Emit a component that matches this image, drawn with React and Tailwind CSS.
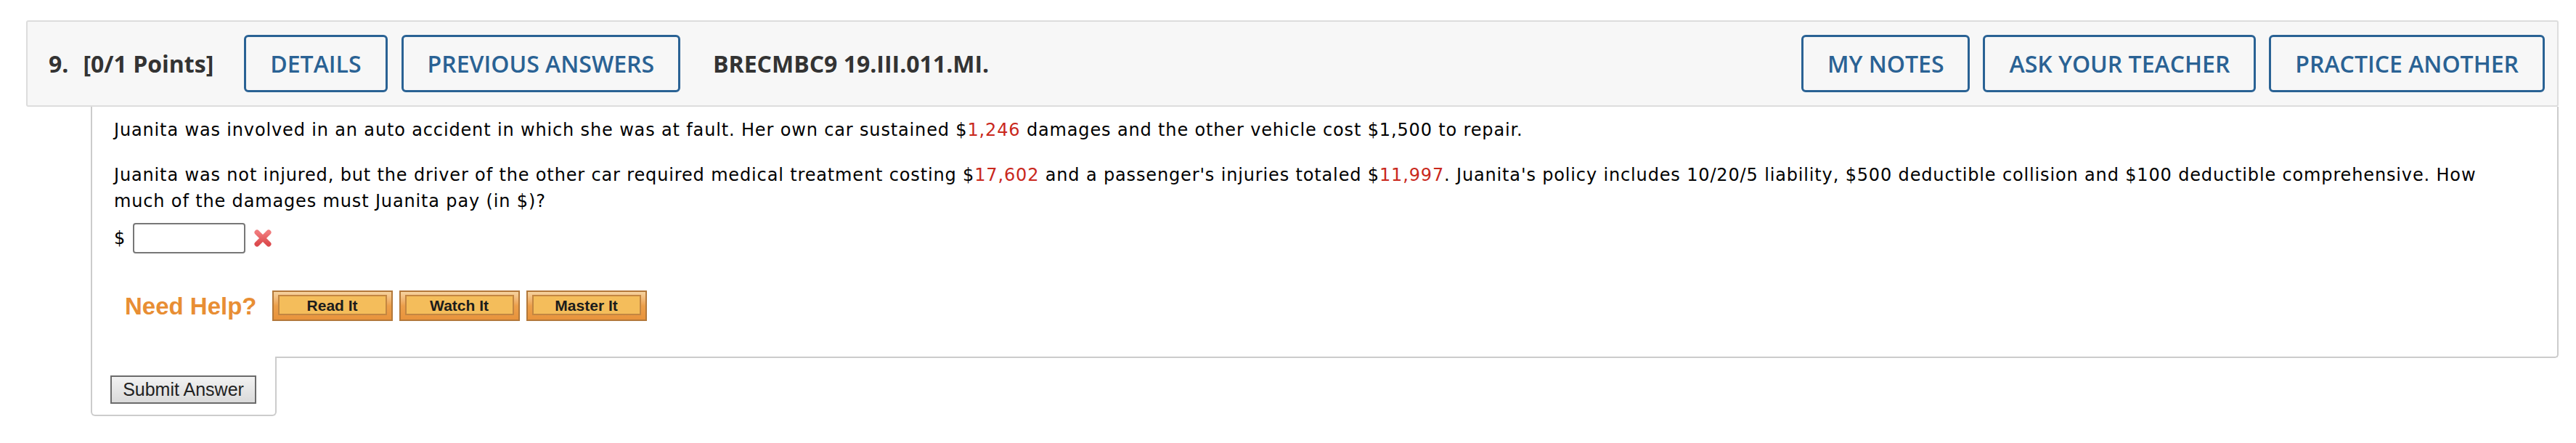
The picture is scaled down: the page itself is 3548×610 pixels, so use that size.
import React from 'react';

const headFont = { fontFamily: '"Open Sans", "Liberation Sans", sans-serif' };
const bodyFont = { fontFamily: '"DejaVu Sans", Verdana, sans-serif' };
const arialFont = { fontFamily: '"Liberation Sans", Arial, sans-serif' };

function OutlineButton({ children }) {
  return (
    <button
      className="h-[79px] px-[33px] border-[3px] border-[#2a6294] rounded-[6px] text-[32px] leading-none font-semibold text-[#2a6294] bg-[#f7f7f7] whitespace-nowrap"
      style={headFont}
    >
      {children}
    </button>
  );
}

function HelpButton({ children }) {
  return (
    <button
      className="w-[166px] h-[42px] flex border-2 border-[#b3783a] bg-linear-to-b from-[#f6d3a0] via-[#ec9f4a] to-[#e8933c] pt-[4px] pb-[6px] px-[6px]"
      style={arialFont}
    >
      <span className="flex-1 flex items-center justify-center border-2 border-[#c38641] bg-[#f4bd5b] text-[21px] font-bold text-[#1c1c1c] leading-none">
        {children}
      </span>
    </button>
  );
}

function RedX() {
  return (
    <svg width="26" height="26" viewBox="0 0 26 26" className="ml-[11px]">
      <defs>
        <linearGradient id="xg" x1="0" y1="0" x2="0" y2="1">
          <stop offset="0" stopColor="#f07a7c" />
          <stop offset="1" stopColor="#dc4a4d" />
        </linearGradient>
      </defs>
      <path d="M5 5 L21 21 M21 5 L5 21" stroke="url(#xg)" strokeWidth="7" strokeLinecap="round" fill="none" />
    </svg>
  );
}

const Red = ({ children }) => <span className="text-[#c9281c]">{children}</span>;

export default function App() {
  return (
    <div className="w-[3548px] h-[610px] bg-white pt-[28px] pl-[36px] pr-[24px]">
      {/* Question header */}
      <div className="h-[119px] flex items-center border-2 border-[#dddddd] rounded-[3px] bg-[#f7f7f7] pl-[29px] pr-[17px]" style={headFont}>
        <span className="text-[32px] leading-none font-bold text-[#333]">9.</span>
        <span className="ml-[20px] text-[32px] leading-none font-bold text-[#333]">[0/1 Points]</span>
        <div className="ml-[42px] flex gap-[19px]">
          <OutlineButton>DETAILS</OutlineButton>
          <OutlineButton>PREVIOUS ANSWERS</OutlineButton>
        </div>
        <span className="ml-[45px] text-[32px] leading-none font-bold text-[#333]">BRECMBC9 19.III.011.MI.</span>
        <div className="ml-auto flex gap-[18px]">
          <OutlineButton>MY NOTES</OutlineButton>
          <OutlineButton>ASK YOUR TEACHER</OutlineButton>
          <OutlineButton>PRACTICE ANOTHER</OutlineButton>
        </div>
      </div>

      {/* Question body */}
      <div className="ml-[89px] border-x-2 border-b-2 border-[#cccccc] rounded-br-[5px] bg-white pl-[30px] pr-[50px] pt-[14px] pb-[49px] text-[24px] leading-[36px] tracking-[0.85px] text-black" style={bodyFont}>
        <p>
          Juanita was involved in an auto accident in which she was at fault. Her own car sustained $<Red>1,246</Red> damages and the other vehicle cost $1,500 to repair.
        </p>
        <p className="mt-[26px]">
          Juanita was not injured, but the driver of the other car required medical treatment costing $<Red>17,602</Red> and a passenger's injuries totaled $<Red>11,997</Red>. Juanita's policy includes 10/20/5 liability, $500 deductible collision and $100 deductible comprehensive. How much of the damages must Juanita pay (in $)?
        </p>
        <div className="mt-[12px] flex items-center">
          <span>$</span>
          <input type="text" className="ml-[10px] w-[155px] h-[42px] border-2 border-[#777] rounded-[4px] bg-white outline-none" />
          <RedX />
        </div>
        <div className="mt-[51px] flex items-center tracking-normal">
          <span className="ml-[15px] text-[33px] font-bold text-[#e88e34] leading-none" style={arialFont}>Need Help?</span>
          <div className="ml-[21px] flex gap-[9px]">
            <HelpButton>Read It</HelpButton>
            <HelpButton>Watch It</HelpButton>
            <HelpButton>Master It</HelpButton>
          </div>
        </div>
      </div>

      {/* Submit tab */}
      <div className="relative -mt-[2px] ml-[89px] w-[256px] h-[82px] border-x-2 border-b-2 border-[#cccccc] rounded-b-[6px] bg-white pl-[25px] pt-[26px]">
        <button className="w-[201px] h-[39px] border-2 border-[#6b6b6b] bg-linear-to-b from-[#f2f2f2] to-[#dadada] text-[25px] text-[#222] leading-none" style={arialFont}>
          Submit Answer
        </button>
      </div>
    </div>
  );
}
